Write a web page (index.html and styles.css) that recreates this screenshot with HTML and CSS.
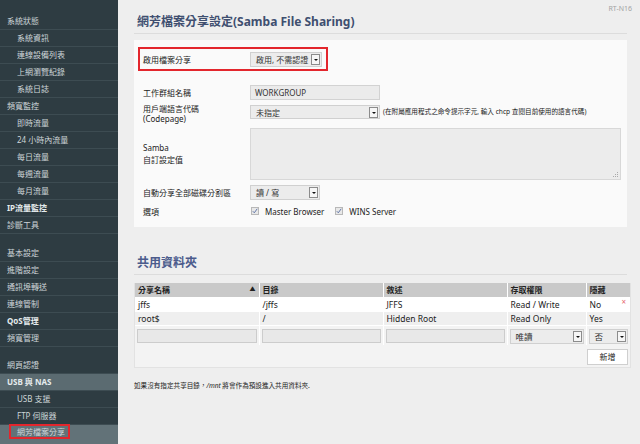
FILE: index.html
```html
<!DOCTYPE html>
<html>
<head>
    <meta charset="UTF-8" />
    <title>網芳檔案分享設定</title>
    <meta name="viewport" content="width=device-width, initial-scale=1">
    <link rel="stylesheet" href="styles.css">
</head>
<body>
<div class="layout">

<nav class="sidebar">
  <ul class="menu">
    <li class="group">系統狀態</li>
    <li class="sub">系統資訊</li>
    <li class="sub">連線設備列表</li>
    <li class="sub">上網瀏覽紀錄</li>
    <li class="sub">系統日誌</li>
    <li class="group">頻寬監控</li>
    <li class="sub">即時流量</li>
    <li class="sub">24 小時內流量</li>
    <li class="sub">每日流量</li>
    <li class="sub">每週流量</li>
    <li class="sub">每月流量</li>
    <li class="group strong">IP流量監控</li>
    <li class="group">診斷工具</li>
    <li class="gap"></li>
    <li class="group">基本設定</li>
    <li class="group">進階設定</li>
    <li class="group">通訊埠轉送</li>
    <li class="group">連線管制</li>
    <li class="group strong">QoS管理</li>
    <li class="group">頻寬管理</li>
    <li class="gap small"></li>
    <li class="group">網頁認證</li>
    <li class="group strong open">USB 與 NAS</li>
    <li class="sub">USB 支援</li>
    <li class="sub">FTP 伺服器</li>
    <li class="sub current"><span class="mark">網芳檔案分享</span></li>
  </ul>
</nav>

<main class="content">
  <header class="page-head">
    <div class="model">RT-N16</div>
    <h1>網芳檔案分享設定(Samba File Sharing)</h1>
  </header>

  <section class="panel">
    <div class="enable-box">
      <span class="label">啟用檔案分享</span>
      <div class="select w72"><span>啟用, 不需認證</span><i class="btn"></i></div>
    </div>

    <div class="row r-workgroup">
      <span class="label">工作群組名稱</span>
      <div class="input w130">WORKGROUP</div>
    </div>

    <div class="row r-codepage">
      <span class="label two">用戶端語言代碼<br>(Codepage)</span>
      <div class="select w130"><span>未指定</span><i class="btn"></i></div>
      <span class="hint">(在附屬應用程式之命令提示字元, 輸入 chcp 查閱目前使用的語言代碼)</span>
    </div>

    <div class="row r-samba">
      <span class="label tall">Samba<br>自訂設定值</span>
      <div class="textarea">
        <svg class="grip" width="7" height="7" viewBox="0 0 7 7">
          <rect x="5" y="1" width="1" height="1" fill="#aaa"/>
          <rect x="3" y="3" width="1" height="1" fill="#aaa"/>
          <rect x="5" y="3" width="1" height="1" fill="#aaa"/>
          <rect x="1" y="5" width="1" height="1" fill="#aaa"/>
          <rect x="3" y="5" width="1" height="1" fill="#aaa"/>
          <rect x="5" y="5" width="1" height="1" fill="#aaa"/>
        </svg>
      </div>
    </div>

    <div class="row r-auto">
      <span class="label">自動分享全部磁碟分割區</span>
      <div class="select w70"><span>讀 / 寫</span><i class="btn"></i></div>
    </div>

    <div class="row r-options">
      <span class="label">選項</span>
      <span class="check"><svg width="6" height="6" viewBox="0 0 6 6"><path d="M0.8 3.2 L2.3 4.8 L5.2 0.8" fill="none" stroke="#6478a8" stroke-width="1"/></svg></span>
      <span class="check-text">Master Browser</span>
      <span class="check"><svg width="6" height="6" viewBox="0 0 6 6"><path d="M0.8 3.2 L2.3 4.8 L5.2 0.8" fill="none" stroke="#6478a8" stroke-width="1"/></svg></span>
      <span class="check-text">WINS Server</span>
    </div>
  </section>

  <h2 class="section-title">共用資料夾</h2>

  <div class="share-table">
    <table>
      <colgroup>
        <col class="c-name"><col class="c-dir"><col class="c-desc"><col class="c-perm"><col>
      </colgroup>
      <tr>
        <th>分享名稱<span class="sort">▲</span></th>
        <th>目錄</th>
        <th>敘述</th>
        <th>存取權限</th>
        <th>隱藏</th>
      </tr>
      <tr class="odd">
        <td>jffs</td>
        <td>/jffs</td>
        <td>JFFS</td>
        <td>Read / Write</td>
        <td>No<span class="del">×</span></td>
      </tr>
      <tr class="even">
        <td>root$</td>
        <td>/</td>
        <td>Hidden Root</td>
        <td>Read Only</td>
        <td>Yes</td>
      </tr>
      <tr class="new">
        <td><div class="input cell"></div></td>
        <td><div class="input cell"></div></td>
        <td><div class="input cell"></div></td>
        <td><div class="select cell"><span>唯讀</span><i class="btn"></i></div></td>
        <td><div class="select cell"><span>否</span><i class="btn"></i></div></td>
      </tr>
    </table>
    <div class="add-row"><span class="button">新增</span></div>
  </div>

  <p class="note">如果沒有指定共享目錄，<i>/mnt</i> 將會作為預設進入共用資料夾.</p>
</main>

</div>
</body>
</html>
```

FILE: styles.css
```css
* {
  box-sizing: border-box;
}

html, body {
  margin: 0;
  height: 100%;
}

body {
  font-family: "Noto Sans", "Noto Sans CJK TC", sans-serif;
  font-size: 8px;
  color: #222;
  background: #eeeeee;
  overflow: hidden;
}

.layout {
  display: flex;
  height: 444px;
}

/* Side menu */
.sidebar {
  width: 118px;
  flex: none;
  background: #2e3c42;
  padding-top: 13px;
  overflow: hidden;
}

.menu {
  list-style-type: none;
  margin: 0;
  padding: 0;
}

.menu li {
  height: 17px;
  line-height: 16px;
  border-bottom: 1px solid #3d4c52;
  color: #cdd5d8;
  padding-left: 7px;
  white-space: nowrap;
}

.menu li.sub {
  padding-left: 17px;
}

.menu li.strong {
  font-weight: bold;
  color: #e6ecee;
}

.menu li.gap {
  height: 11px;
  border-bottom: none;
}

.menu li.gap.small {
  height: 10px;
}

.menu li.open {
  background: #5b6b71;
}

.menu li.current {
  background: #627278;
  height: 19px;
  border-bottom: none;
}

.mark {
  display: inline-block;
  height: 15px;
  line-height: 11px;
  margin-left: -8px;
  padding: 0 3px 0 6px;
  border: 2px solid #e3262d;
  vertical-align: top;
  margin-top: -1px;
}

/* Main content */
.content {
  flex: 1;
  padding: 0 8px 0 16px;
}

.page-head {
  height: 34px;
  border-bottom: 1px solid #dcdcdc;
  margin-right: 5px;
}

.model {
  text-align: right;
  font-size: 7px;
  line-height: 10px;
  padding-top: 4px;
  margin-right: -5px;
  color: #a3a3a3;
}

h1 {
  margin: 0;
  padding-left: 3px;
  font-size: 12px;
  line-height: 16px;
  color: #3f4f70;
  font-weight: bold;
}

/* Settings panel */
.panel {
  margin: 6px 5px 0 0;
  background: #fafafa;
  padding: 7px 6px 8px 4px;
}

.label {
  width: 107px;
  flex: none;
}

.enable-box {
  display: flex;
  align-items: center;
  width: 190px;
  height: 24px;
  border: 2px solid #e3262d;
  padding-left: 3px;
}

.row {
  display: flex;
  align-items: center;
  padding-left: 5px;
}

.r-workgroup {
  margin-top: 13px;
  height: 17px;
}

.r-codepage {
  margin-top: 1px;
  height: 22px;
  align-items: flex-start;
}

.r-codepage .label {
  line-height: 9.5px;
  margin-top: 2px;
}

.r-codepage .select {
  margin-top: 3px;
  height: 14px;
}

.hint {
  font-size: 6.6px;
  line-height: 8px;
  margin: 6px 0 0 3px;
  white-space: nowrap;
}

.r-samba {
  margin-top: 4px;
  height: 52px;
}

.r-samba .label {
  line-height: 12px;
}

.r-auto {
  margin-top: 4px;
  height: 17px;
}

.r-options {
  margin-top: 2px;
  height: 16px;
}

/* Form controls */
.input {
  height: 15px;
  line-height: 13px;
  padding-left: 4px;
  background: #ebebeb;
  border: 1px solid #d2d2d2;
  color: #333;
}

.select {
  display: flex;
  align-items: center;
  justify-content: space-between;
  height: 15px;
  padding: 0 1px 0 5px;
  background: #ececec;
  border: 1px solid #d0d0d0;
  color: #333;
  white-space: nowrap;
}

.select .btn {
  position: relative;
  width: 9px;
  height: 11px;
  flex: none;
  border: 1px solid #8c8c8c;
  background: #f6f6f6;
}

.select .btn::after {
  content: "";
  position: absolute;
  left: 2px;
  top: 4px;
  border-left: 2px solid transparent;
  border-right: 2px solid transparent;
  border-top: 2px solid #111;
}

.w72 { width: 72px; }
.w70 { width: 70px; }
.w130 { width: 130px; }

.textarea {
  position: relative;
  width: 371px;
  height: 52px;
  background: #ececec;
  border: 1px solid #d8d8d8;
}

.grip {
  position: absolute;
  right: 1px;
  bottom: 1px;
}

.check {
  display: inline-flex;
  align-items: center;
  justify-content: center;
  width: 8px;
  height: 8px;
  margin-left: 1px;
  background: #e8e8e8;
  border: 1px solid #b8b8b8;
}

.check-text {
  margin: 0 10px 0 6px;
  font-size: 8px;
}

/* Shared folders */
.section-title {
  margin: 28px 5px 0 0;
  padding: 0 0 3px 3px;
  font-size: 12px;
  line-height: 16px;
  font-weight: bold;
  color: #4b5b8c;
  border-bottom: 1px solid #dcdcdc;
}

.share-table {
  margin: 8px 1px 0 0;
  background: #f3f3f3;
  border: 1px solid #e2e2e2;
  border-top: none;
  padding-bottom: 1px;
}

table {
  width: 100%;
  border-collapse: collapse;
  table-layout: fixed;
}

.c-name, .c-dir, .c-desc { width: 124px; }
.c-perm { width: 79px; }

th {
  height: 14px;
  padding: 0 3px;
  text-align: left;
  font-weight: bold;
  line-height: 13px;
  background: #c9c9c9;
  border-right: 1px solid #fff;
  border-bottom: 1px solid #fff;
}

.sort {
  float: right;
  font-size: 6px;
}

td {
  height: 14px;
  padding: 0 3px;
  line-height: 13px;
  font-size: 8.5px;
  border-right: 1px solid #fff;
  border-bottom: 1px solid #fff;
  white-space: nowrap;
}

th:last-child, td:last-child {
  border-right: none;
}

tr.odd td {
  background: #fff;
}

tr.even td {
  background: #efefef;
}

tr.new td {
  height: 19px;
  padding: 3px 2px 1px;
  background: #f3f3f3;
  border-bottom: none;
}

.input.cell {
  height: 14px;
  background: #e8e8e8;
  border-color: #cccccc;
}

.select.cell {
  height: 15px;
}

.del {
  float: right;
  color: #e6676d;
  font-size: 8px;
  line-height: 8px;
  margin-right: 1px;
}

.add-row {
  display: flex;
  justify-content: flex-end;
  padding: 4px 2px 1px 0;
}

.button {
  width: 41px;
  height: 16px;
  line-height: 14px;
  text-align: center;
  background: #fff;
  border: 1px solid #cfcfcf;
}

.note {
  margin: 13px 0 0;
  font-size: 6.6px;
  line-height: 10px;
}
```
